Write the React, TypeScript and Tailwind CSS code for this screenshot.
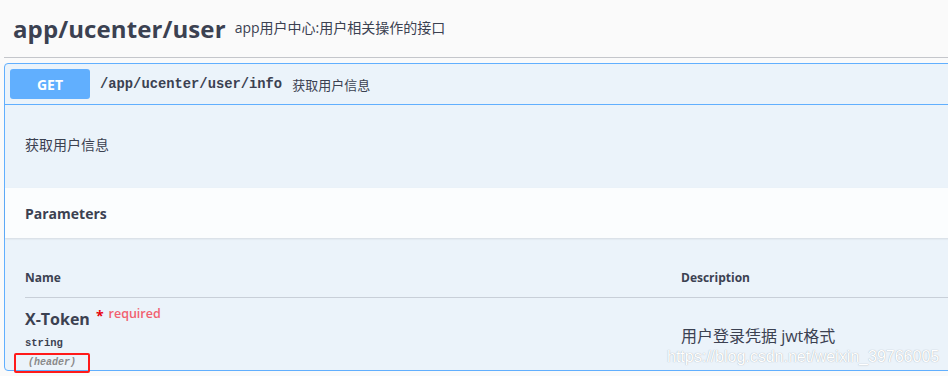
import React from "react";

const sans = "font-['Open_Sans','Noto_Sans_CJK_SC',sans-serif]";
const mono = "font-['Liberation_Mono','Noto_Sans_CJK_SC',monospace]";

export default function App() {
  return (
    <div className={`relative w-[948px] h-[376px] overflow-hidden bg-[#fafafa] text-[#3b4151] ${sans}`}>
      <div className="ml-[4px] h-[58px] border-b border-[#c4c6cb] flex items-center pl-[9px]">
        <span className="text-[24px] font-bold leading-[30px] tracking-[0.1px]">app/ucenter/user</span>
        <span className="ml-[9px] text-[14px] leading-[20px] mt-[-2px]">app用户中心:用户相关操作的接口</span>
      </div>

      <div className="mt-[5px] ml-[4px] w-[970px] border border-[#61affe] rounded-[4px] bg-[#ebf3fa]">
        <div className="flex items-center p-[5px] border-b border-[#61affe]">
          <div className="w-[80px] h-[30px] rounded-[3px] bg-[#61affe] text-white font-bold text-[14px] flex items-center justify-center">
            GET
          </div>
          <span className={`px-[10px] pt-[3px] text-[13.8px] font-bold ${mono}`}>/app/ucenter/user/info</span>
          <span className="pt-[3px] text-[13px]">获取用户信息</span>
        </div>

        <div className="h-[83px] pl-[20px] pt-[30px] text-[14px] leading-[20px]">获取用户信息</div>

        <div className="h-[50px] bg-white/80 shadow-[0_1px_2px_rgba(0,0,0,0.1)] flex items-center px-[20px]">
          <span className="text-[14px] font-bold">Parameters</span>
        </div>

        <div className="pl-[20px]">
          <div className="flex pt-[32px] pb-[11px] border-b border-[#c8cfd8] text-[12px] font-bold leading-[16px]">
            <div className="w-[656px]">Name</div>
            <div>Description</div>
          </div>
          <div className="flex">
            <div className="w-[656px] pt-[11px]">
              <div className="flex items-start">
                <span className="text-[16px] font-bold leading-[20px]">X-Token</span>
                <span className="ml-[6px] text-[14px] text-red-600 leading-[16px] font-bold relative top-[-1px]">*</span>
                <span className="ml-[5px] text-[12.5px] text-[#f2606f] font-semibold leading-[16px] relative top-[-3px]">required</span>
              </div>
              <div className={`mt-[7px] text-[10.5px] font-bold leading-[14px] ${mono}`}>string</div>
              <div className="mt-[6px] ml-[3px] flex leading-[14px]">
                <span className={`relative block text-[10px] italic leading-[14px] text-[#8a8a8a] font-bold ${mono}`}>
                  (header)
                  <span className="absolute left-[-14px] right-[-14px] top-[-3px] bottom-[-3px] border-2 border-[#ff1a1a] rounded-[2px]"></span>
                </span>
              </div>
            </div>
            <div className="pt-[28px] text-[16px] leading-[20px]">用户登录凭据 jwt格式</div>
          </div>
        </div>
      </div>

      <div className="absolute left-[667px] top-[348px] text-[16px] leading-[18px] text-white font-['Liberation_Sans',sans-serif] [text-shadow:0_0_1px_rgba(110,120,130,0.7)]">
        https://blog.csdn.net/weixin_39766005
      </div>
    </div>
  );
}
